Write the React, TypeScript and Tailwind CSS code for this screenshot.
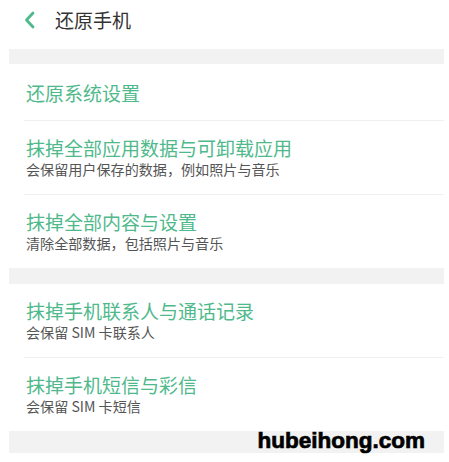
import React from "react";

const green = "text-[#4fb98b]";

function Row({ title, sub, last }: { title: string; sub?: string; last?: boolean }) {
  return (
    <div className="flex flex-col">
      <div className={`flex flex-col justify-center pl-[26px] ${sub ? "h-[73px]" : "h-[56px]"}`}>
        <div className={`${green} text-[19px] leading-[23px]`}>{title}</div>
        {sub && <div className="text-[#555555] text-[14.1px] leading-[21px]">{sub}</div>}
      </div>
      {!last && <div className="ml-[24px] mr-[5px] h-px bg-[#f0f0f0]" />}
    </div>
  );
}

function Bar({ h, children }: { h: string; children?: React.ReactNode }) {
  return <div className={`ml-[9px] mr-[5px] bg-[#f2f2f2] ${h} relative`}>{children}</div>;
}

export default function App() {
  return (
    <div
      className="w-[449px] h-[462px] bg-white overflow-hidden flex flex-col"
      style={{ fontFamily: '"Noto Sans CJK SC", "Noto Sans", sans-serif' }}
    >
      <div className="h-[49px] flex items-start pt-[8px]">
        <div className="w-[55px] h-[24px] flex items-center pl-[23px]">
          <svg width="14" height="18" viewBox="0 0 14 18">
            <polyline points="10,2 3.5,9 10,16" fill="none" stroke="#4fb98b" strokeWidth="2.8" strokeLinecap="round" strokeLinejoin="round" />
          </svg>
        </div>
        <div className="text-[#333333] text-[19px] leading-[24px]">还原手机</div>
      </div>
      <Bar h="h-[15px]" />
      <Row title="还原系统设置" />
      <Row title="抹掉全部应用数据与可卸载应用" sub="会保留用户保存的数据，例如照片与音乐" />
      <Row title="抹掉全部内容与设置" sub="清除全部数据，包括照片与音乐" last />
      <Bar h="h-[16px]" />
      <Row title="抹掉手机联系人与通话记录" sub="会保留 SIM 卡联系人" />
      <Row title="抹掉手机短信与彩信" sub="会保留 SIM 卡短信" last />
      <Bar h="h-[22px]">
        <div
          className="absolute right-[19px] top-[-4px] text-black font-bold text-[22.5px] leading-[28px] [-webkit-text-stroke:0.7px_black]"
          style={{ fontFamily: '"Liberation Sans", sans-serif' }}
        >
          hubeihong.com
        </div>
      </Bar>
    </div>
  );
}
